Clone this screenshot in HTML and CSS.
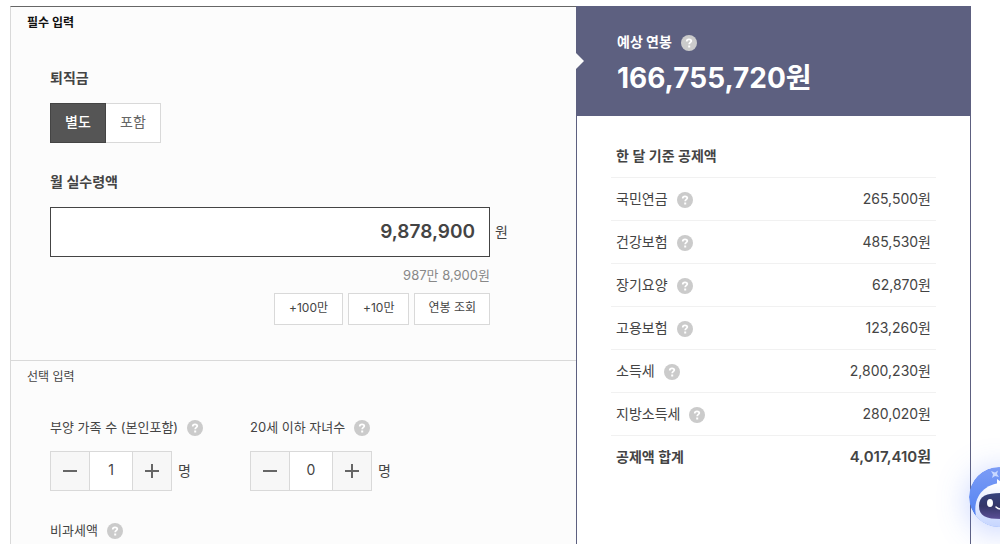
FILE: index.html
```html
<!DOCTYPE html>
<html lang="ko">
<head>
    <meta charset="UTF-8">
    <meta name="viewport" content="width=device-width, initial-scale=1.0">
    <title>연봉 계산기</title>
    <link rel="stylesheet" href="styles.css">
</head>
<body>
    <main class="calculator">
        <form class="inputs">
            <section class="required">
                <h2 class="section-title">필수 입력</h2>
                <div class="section-body">
                    <fieldset class="toggle-field">
                        <legend class="label">퇴직금</legend>
                        <div class="toggle">
                            <input type="radio" name="severance" id="separate" checked>
                            <label for="separate">별도</label>
                            <input type="radio" name="severance" id="included">
                            <label for="included">포함</label>
                        </div>
                    </fieldset>
                    <label class="label" for="salary">월 실수령액</label>
                    <div class="money">
                        <input type="text" id="salary" value="9,878,900">
                        <span>원</span>
                    </div>
                    <div class="money-extra">
                        <p>987만 8,900원</p>
                        <div class="quick">
                            <button type="button" class="amount">+100만</button>
                            <button type="button" class="amount">+10만</button>
                            <button type="button">연봉 조회</button>
                        </div>
                    </div>
                </div>
            </section>
            <section class="optional">
                <h2 class="section-title">선택 입력</h2>
                <div class="section-body">
                    <div class="counts">
                        <div>
                            <div class="label-row">
                                <label for="family">부양 가족 수 (본인포함)</label>
                                <button type="button" class="help" aria-label="도움말"><svg viewBox="0 0 16 16"><use href="#question"/></svg></button>
                            </div>
                            <div class="stepper">
                                <div class="stepper-box">
                                    <button type="button" class="minus" aria-label="빼기"></button>
                                    <input type="text" id="family" value="1">
                                    <button type="button" class="plus" aria-label="더하기"></button>
                                </div>
                                <span>명</span>
                            </div>
                        </div>
                        <div>
                            <div class="label-row">
                                <label for="children">20세 이하 자녀수</label>
                                <button type="button" class="help" aria-label="도움말"><svg viewBox="0 0 16 16"><use href="#question"/></svg></button>
                            </div>
                            <div class="stepper">
                                <div class="stepper-box">
                                    <button type="button" class="minus" aria-label="빼기"></button>
                                    <input type="text" id="children" value="0">
                                    <button type="button" class="plus" aria-label="더하기"></button>
                                </div>
                                <span>명</span>
                            </div>
                        </div>
                    </div>
                    <div class="label-row">
                        <span>비과세액</span>
                        <button type="button" class="help" aria-label="도움말"><svg viewBox="0 0 16 16"><use href="#question"/></svg></button>
                    </div>
                </div>
            </section>
        </form>

        <aside class="result">
            <header class="total">
                <div class="label-row">
                    <h2>예상 연봉</h2>
                    <button type="button" class="help" aria-label="도움말"><svg viewBox="0 0 16 16"><use href="#question"/></svg></button>
                </div>
                <strong>166,755,720원</strong>
            </header>
            <table class="deductions">
                <caption>한 달 기준 공제액</caption>
                <tbody>
                    <tr>
                        <th scope="row"><div class="label-row">국민연금 <button type="button" class="help" aria-label="도움말"><svg viewBox="0 0 16 16"><use href="#question"/></svg></button></div></th>
                        <td>265,500원</td>
                    </tr>
                    <tr>
                        <th scope="row"><div class="label-row">건강보험 <button type="button" class="help" aria-label="도움말"><svg viewBox="0 0 16 16"><use href="#question"/></svg></button></div></th>
                        <td>485,530원</td>
                    </tr>
                    <tr>
                        <th scope="row"><div class="label-row">장기요양 <button type="button" class="help" aria-label="도움말"><svg viewBox="0 0 16 16"><use href="#question"/></svg></button></div></th>
                        <td>62,870원</td>
                    </tr>
                    <tr>
                        <th scope="row"><div class="label-row">고용보험 <button type="button" class="help" aria-label="도움말"><svg viewBox="0 0 16 16"><use href="#question"/></svg></button></div></th>
                        <td>123,260원</td>
                    </tr>
                    <tr>
                        <th scope="row"><div class="label-row">소득세 <button type="button" class="help" aria-label="도움말"><svg viewBox="0 0 16 16"><use href="#question"/></svg></button></div></th>
                        <td>2,800,230원</td>
                    </tr>
                    <tr>
                        <th scope="row"><div class="label-row">지방소득세 <button type="button" class="help" aria-label="도움말"><svg viewBox="0 0 16 16"><use href="#question"/></svg></button></div></th>
                        <td>280,020원</td>
                    </tr>
                    <tr class="sum">
                        <th scope="row">공제액 합계</th>
                        <td>4,017,410원</td>
                    </tr>
                </tbody>
            </table>
        </aside>
    </main>

    <button type="button" class="chatbot" aria-label="챗봇">
        <svg viewBox="0 0 60 60">
            <defs>
                <linearGradient id="bot-bg" x1="0" y1="0" x2="0" y2="1">
                    <stop offset="0" stop-color="#7c9cf6"/>
                    <stop offset="1" stop-color="#4a7df0"/>
                </linearGradient>
                <linearGradient id="bot-head" x1="0" y1="0" x2="0" y2="1">
                    <stop offset="0" stop-color="#ffffff"/>
                    <stop offset="1" stop-color="#c3d3ff"/>
                </linearGradient>
                <linearGradient id="bot-face" x1="0" y1="0" x2="0" y2="1">
                    <stop offset="0" stop-color="#35427c"/>
                    <stop offset="0.5" stop-color="#353768"/>
                    <stop offset="1" stop-color="#5b4f96"/>
                </linearGradient>
                <clipPath id="bot-clip"><circle cx="30" cy="30" r="30"/></clipPath>
            </defs>
            <g clip-path="url(#bot-clip)">
                <circle cx="30" cy="30" r="30" fill="url(#bot-bg)"/>
                <path d="M28 18 L28 12 L35 17 Z" fill="#fff"/>
                <path d="M8 52 C2 35 12 16 34 16 C52 16 62 30 58 48 L46 62 L14 62 Z" fill="url(#bot-head)"/>
                <path d="M10 39 C10 29 17 26 32 26 C47 26 54 29 54 39 C54 49 47 52 32 52 C17 52 10 49 10 39 Z" fill="url(#bot-face)"/>
                <ellipse cx="21" cy="36" rx="3" ry="4" fill="#fff"/>
                <ellipse cx="41" cy="36" rx="3" ry="4" fill="#fff"/>
                <path d="M27 40 Q31 44 36 40" fill="none" stroke="#fff" stroke-width="1.6" stroke-linecap="round"/>
            </g>
            <path d="M22 4 L26 5.500 L29 3.500 L28 7 L30 10 L26 9 L23 11 L24 7.500 Z" fill="#c9d8ff"/>
        </svg>
    </button>

    <svg class="sprite" aria-hidden="true">
        <symbol id="question" viewBox="0 0 16 16">
            <circle cx="8" cy="8" r="8" fill="#cbcbcb"/>
            <path d="M5.800 6.500 V6.100 C5.800 4.900 6.700 4.300 8 4.300 C9.400 4.300 10.300 5 10.300 6.100 C10.300 7.400 8.200 7.500 8.200 9.300" fill="none" stroke="#fff" stroke-width="1.800"/>
            <rect x="7.200" y="10.500" width="2" height="2" fill="#fff"/>
        </symbol>
    </svg>
</body>
</html>
```
FILE: styles.css
```css
html{
    font-family: Inter, "Noto Sans CJK KR", sans-serif;
    font-size: 14px;
    line-height: 20px;
    color: #444;
    background-color: #fff;
}

*,
*::after,
*::before{
    box-sizing: border-box;
}

body,
h2,
p,
fieldset{
    margin: 0;
    padding: 0;
    border: 0;
}

button,
input{
    margin: 0;
    padding: 0;
    border: 0;
    border-radius: 0;
    font: inherit;
    color: inherit;
    background: none;
}

.calculator{
    display: grid;
    grid-template-columns: 1fr 395px;
    margin: 6px 29px 0 10px;
    min-height: calc(100vh - 6px);
}

/* left side */
.inputs{
    border-top: 1px solid #666;
    border-left: 1px solid #d9d9d9;
    background-color: #fcfcfc;
}
.required{
    padding-bottom: 35px;
    border-bottom: 1px solid #d9d9d9;
}
.section-title{
    padding: 6px 16px 0;
    font-size: 12px;
    line-height: 20px;
    font-weight: 400;
}
.required .section-title{
    font-weight: 700;
    color: #111;
}
.section-body{
    padding: 35px 39px 0;
}
.optional .section-body{
    padding-top: 30px;
}
.label{
    display: block;
    padding: 0;
    font-weight: 600;
}
.toggle-field{
    margin-bottom: 29px;
}
.toggle{
    display: flex;
    margin-top: 15px;
}
.toggle input{
    position: absolute;
    opacity: 0;
}
.toggle label{
    width: 56px;
    height: 40px;
    border: 1px solid #d9d9d9;
    line-height: 36px;
    text-align: center;
    color: #666;
    background-color: #fff;
}
.toggle label:last-child{
    width: 55px;
    border-left: 0;
}
.toggle input:checked + label{
    border-color: #444;
    font-weight: 500;
    color: #fff;
    background-color: #555;
}

.money{
    display: flex;
    align-items: center;
    gap: 5px;
    margin-top: 15px;
}
.money input{
    width: 440px;
    height: 50px;
    padding: 0 14px 2px;
    border: 1px solid #444;
    font-size: 19px;
    font-weight: 600;
    text-align: right;
    background-color: #fff;
}
.money-extra{
    width: 440px;
    padding-top: 8px;
    text-align: right;
}
.money-extra p{
    font-size: 13px;
    color: #888;
}
.quick{
    display: flex;
    justify-content: flex-end;
    gap: 5px;
    margin-top: 8px;
}
.quick button{
    height: 32px;
    padding: 0 13px 2px;
    border: 1px solid #d9d9d9;
    font-size: 12px;
    background-color: #fff;
}
.quick .amount{
    padding: 0 14px 2px;
}

.counts{
    display: grid;
    grid-template-columns: 200px 200px;
    margin-bottom: 29px;
}
.label-row{
    display: flex;
    align-items: center;
    gap: 9px;
}
.optional .label-row{
    font-size: 13px;
}
.help{
    width: 16px;
    height: 16px;
    margin-top: 2px;
}
.help svg{
    display: block;
    width: 16px;
    height: 16px;
}
.stepper{
    display: flex;
    align-items: center;
    gap: 6px;
    margin-top: 14px;
}
.stepper-box{
    display: flex;
    width: 122px;
    height: 40px;
    border: 1px solid #d9d9d9;
    background-color: #fff;
}
.stepper-box input{
    width: 44px;
    padding-bottom: 2px;
    border: solid #d9d9d9;
    border-width: 0 1px;
    text-align: center;
}
.stepper-box button{
    display: grid;
    place-items: center;
    width: 38px;
    background-color: #f7f7f7;
}
.minus::before,
.plus::before,
.plus::after{
    content: "";
    grid-area: 1 / 1;
    width: 14px;
    height: 2px;
    background-color: #666;
}
.plus::after{
    width: 2px;
    height: 14px;
}

/* right side */
.result{
    border: solid #5d6080;
    border-width: 0 1px;
    background-color: #fff;
}
.total{
    position: relative;
    height: 110px;
    padding: 26px 40px 0;
    color: #fff;
    background-color: #5d6080;
}
.total::before{
    content: "";
    position: absolute;
    top: 47px;
    left: -1px;
    border: solid transparent;
    border-width: 8px 0 8px 8px;
    border-left-color: #fcfcfc;
}
.total h2{
    font-size: 14px;
    line-height: 20px;
    font-weight: 700;
}
.total strong{
    display: block;
    margin-top: 8px;
    font-size: 28px;
    line-height: 36px;
    font-weight: 700;
}
.deductions{
    width: calc(100% - 68px);
    margin: 30px 34px 0;
    border-spacing: 0;
}
.deductions caption{
    padding: 0 5px 11px;
    font-weight: 600;
    text-align: left;
}
.deductions th,
.deductions td{
    height: 43px;
    padding: 0 5px;
    border-top: 1px solid #f1f1f1;
    font-weight: 400;
    text-align: left;
}
.deductions td{
    text-align: right;
}
.deductions .sum th,
.deductions .sum td{
    font-weight: 600;
}
.deductions .sum td{
    font-size: 15px;
}

.chatbot{
    position: fixed;
    right: -29px;
    bottom: 17px;
    width: 60px;
    height: 60px;
    border-radius: 50%;
    box-shadow: 0 4px 32px rgba(80, 120, 255, .35);
}
.chatbot svg{
    display: block;
    width: 60px;
    height: 60px;
}
.sprite{
    position: absolute;
    width: 0;
    height: 0;
}
```
